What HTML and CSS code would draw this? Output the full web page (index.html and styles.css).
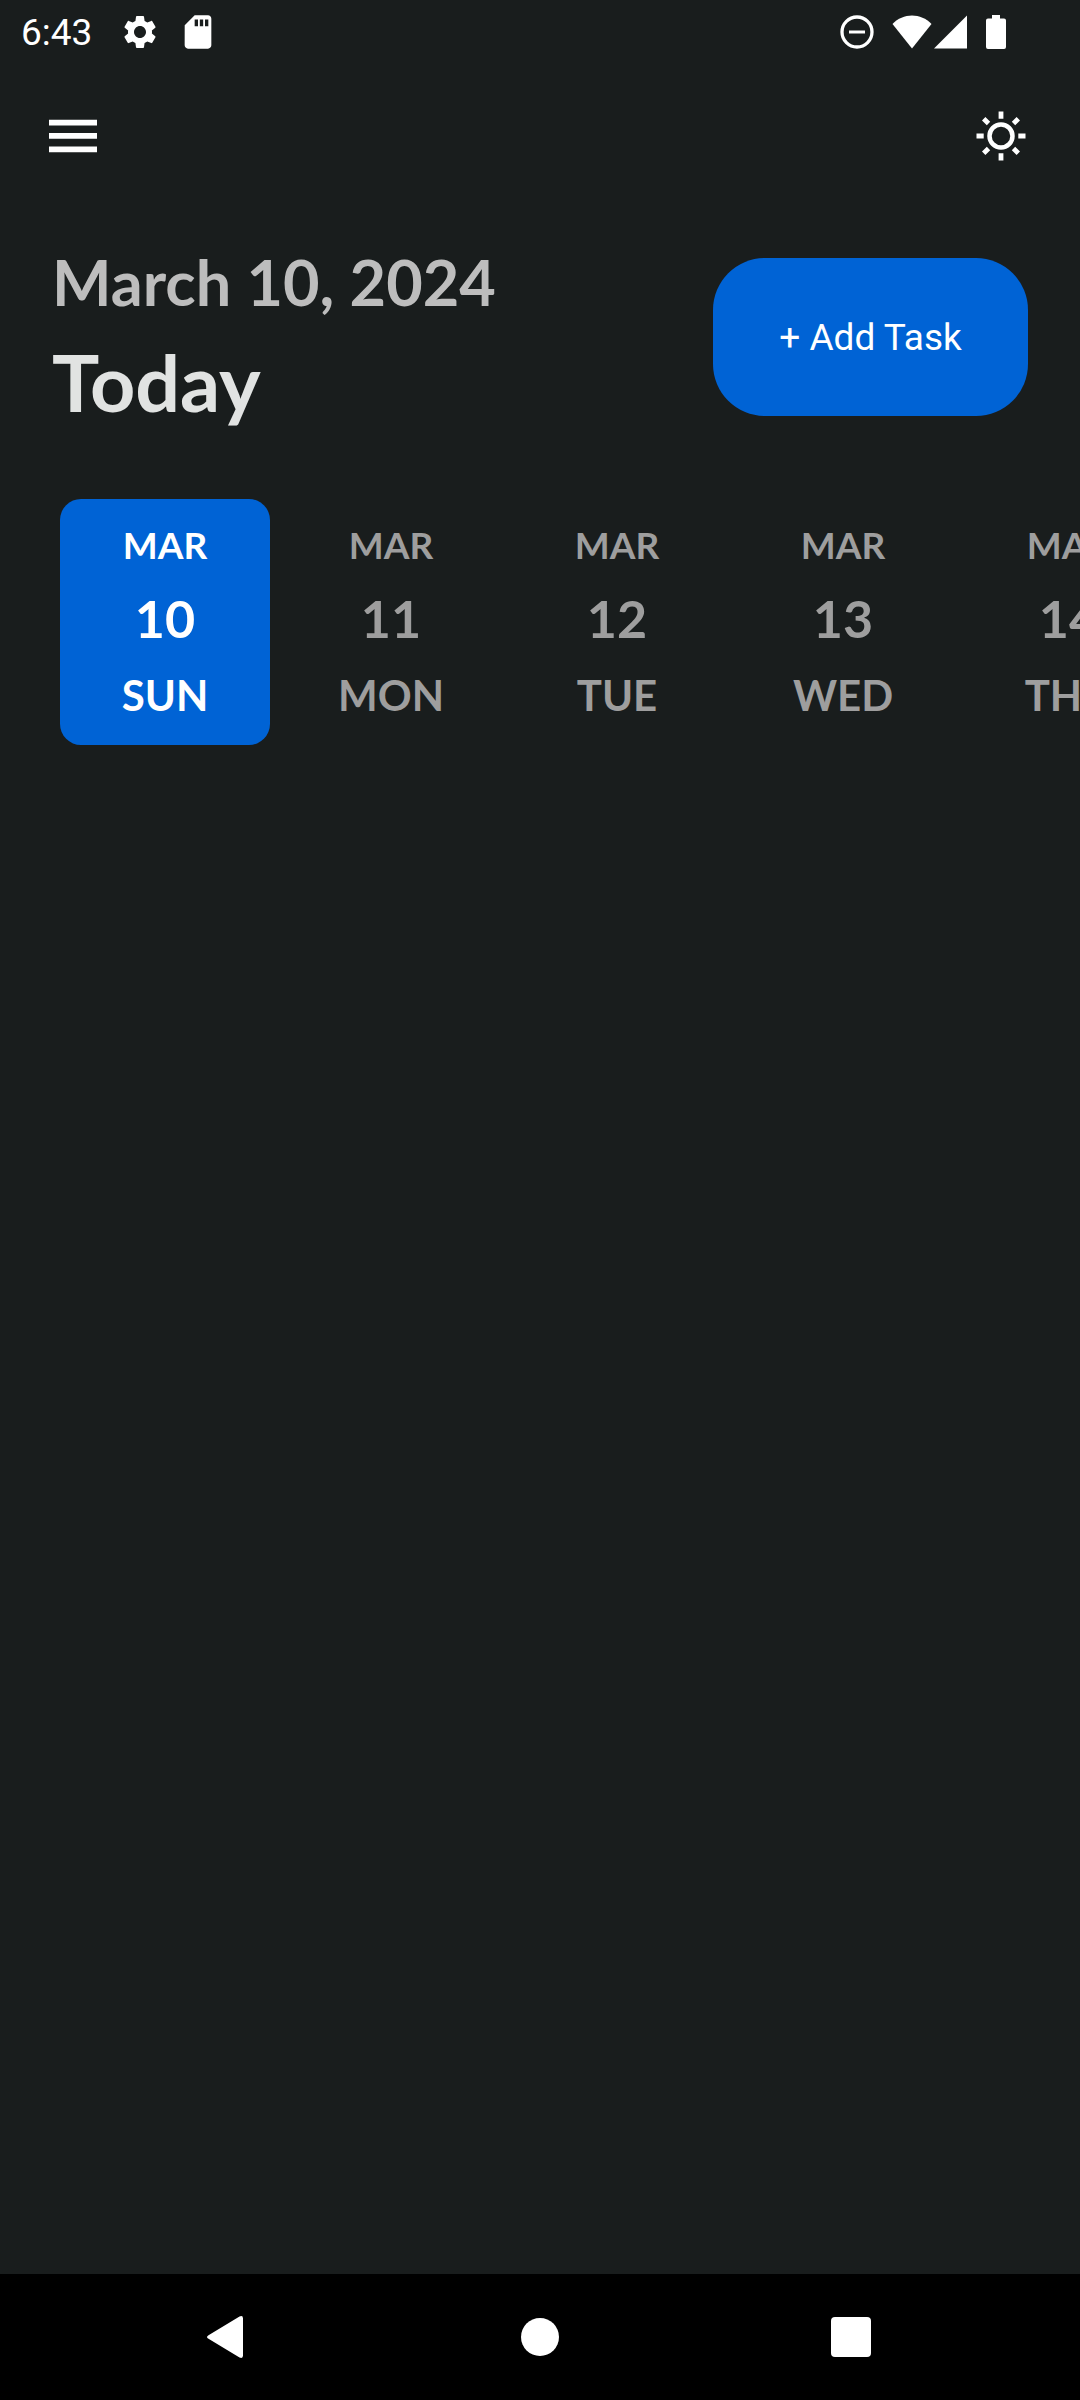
FILE: index.html
```html
<!DOCTYPE html>
<html lang="en">
<head>
<meta charset="utf-8">
<meta name="viewport" content="width=device-width, initial-scale=1">
<title>Tasks</title>
<link rel="stylesheet" href="styles.css">
</head>
<body>
<div class="status-bar">
  <time class="clock">6:43</time>
  <svg class="status-gear" width="40" height="40" viewBox="0 0 24 24" aria-hidden="true"><path d="M19.14 12.94c.04-.3.06-.61.06-.94 0-.32-.02-.64-.07-.94l2.03-1.58c.18-.14.23-.41.12-.61l-1.92-3.32c-.12-.22-.37-.29-.59-.22l-2.39.96c-.5-.38-1.03-.7-1.62-.94l-.36-2.54c-.04-.24-.24-.41-.48-.41h-3.84c-.24 0-.43.17-.47.41l-.36 2.54c-.59.24-1.13.57-1.62.94l-2.39-.96c-.22-.08-.47 0-.59.22L2.74 8.87c-.12.21-.08.47.12.61l2.03 1.58c-.05.3-.09.63-.09.94s.02.64.07.94l-2.03 1.58c-.18.14-.23.41-.12.61l1.92 3.32c.12.22.37.29.59.22l2.39-.96c.5.38 1.03.7 1.62.94l.36 2.54c.05.24.24.41.48.41h3.84c.24 0 .44-.17.47-.41l.36-2.54c.59-.24 1.13-.56 1.62-.94l2.39.96c.22.08.47 0 .59-.22l1.92-3.32c.12-.22.07-.47-.12-.61l-2.01-1.58zM12 15.6c-1.98 0-3.6-1.62-3.6-3.6s1.62-3.6 3.6-3.6 3.6 1.62 3.6 3.6-1.62 3.6-3.6 3.6z"/></svg>
  <svg class="status-card" width="40" height="40" viewBox="0 0 24 24" aria-hidden="true"><path d="M18 2h-8L4.020 8 4 20c0 1.100.9 2 2 2h12c1.100 0 2-.9 2-2V4c0-1.100-.9-2-2-2zm-6 6.500h-2V4.500h2v4zm3.100 0h-2V4.500h2v4zm3.100 0h-2V4.500h2v4z"/></svg>
  <div class="status-right">
    <svg class="status-dnd" width="34" height="34" viewBox="0 0 34 34" aria-hidden="true"><circle cx="17" cy="17" r="15" fill="none" stroke="#fff" stroke-width="3.300"/><path d="M9 15.500h16v3H9z"/></svg>
    <svg width="40" height="34" viewBox="0 0 40 34" aria-hidden="true"><path d="M0.500 9C11-2.500 29-2.500 39.500 9L20 33.500z"/></svg>
    <svg width="34" height="34" viewBox="0 0 34 34" aria-hidden="true"><path d="M33 0.500V33.500H0z"/></svg>
    <svg class="status-battery" width="20" height="34" viewBox="0 0 20 34" aria-hidden="true"><path d="M6 0h8v3.500h4q2 0 2 2V32q0 2-2 2H2q-2 0-2-2V5.500q0-2 2-2h4z"/></svg>
  </div>
</div>

<header class="app-bar">
  <button class="icon-button" type="button" aria-label="Open menu">
    <svg width="64" height="64" viewBox="0 0 24 24" aria-hidden="true"><path d="M3 5.900h18v2.150H3zM3 10.900h18v2.150H3zM3 15.900h18v2.150H3z"/></svg>
  </button>
  <button class="icon-button" type="button" aria-label="Switch to light theme">
    <svg width="50" height="50" viewBox="0 0 50 50" fill="none" stroke="#fff" aria-hidden="true">
      <circle cx="25" cy="25" r="11.500" stroke-width="4.500"/>
      <path stroke-width="4.800" d="M25 .5v7.200M25 42.300v7.200M.5 25h7.200M42.300 25h7.200M7.700 7.700l4.800 4.800M37.500 37.500l4.800 4.800M42.300 7.700l-4.800 4.800M12.500 37.500l-4.800 4.800"/>
    </svg>
  </button>
</header>

<main>
  <section class="summary">
    <div class="heading">
      <p class="date">March 10, 2024</p>
      <h1 class="title">Today</h1>
    </div>
    <button class="add-task" type="button">+ Add Task</button>
  </section>

  <div class="days">
    <button class="day selected" type="button" aria-pressed="true"><span class="month">MAR</span><span class="number">10</span><span class="weekday">SUN</span></button>
    <button class="day" type="button"><span class="month">MAR</span><span class="number">11</span><span class="weekday">MON</span></button>
    <button class="day" type="button"><span class="month">MAR</span><span class="number">12</span><span class="weekday">TUE</span></button>
    <button class="day" type="button"><span class="month">MAR</span><span class="number">13</span><span class="weekday">WED</span></button>
    <button class="day" type="button"><span class="month">MAR</span><span class="number">14</span><span class="weekday">THU</span></button>
  </div>
</main>

<nav class="system-nav" aria-label="System">
  <button class="nav-button" type="button" aria-label="Back"><svg width="48" height="48" viewBox="0 0 48 48" aria-hidden="true"><path d="M3.500 22.200Q.5 24 3.500 25.800L34.500 44.500Q38 46 38 42.500V5.500Q38 2 34.500 3.500z"/></svg></button>
  <button class="nav-button" type="button" aria-label="Home"><svg width="48" height="48" viewBox="0 0 48 48" aria-hidden="true"><circle cx="24" cy="24" r="19"/></svg></button>
  <button class="nav-button" type="button" aria-label="Recent apps"><svg width="48" height="48" viewBox="0 0 48 48" aria-hidden="true"><rect x="4" y="4" width="40" height="40" rx="4"/></svg></button>
</nav>
</body>
</html>
```
FILE: styles.css
```css
* {
  box-sizing: border-box;
}

body {
  margin: 0;
  min-height: 100vh;
  display: flex;
  flex-direction: column;
  background: #191d1d;
  color: #fff;
  font-family: Lato, sans-serif;
}

button {
  margin: 0;
  padding: 0;
  border: 0;
  background: none;
  color: inherit;
  font: inherit;
  cursor: pointer;
}

svg {
  display: block;
  flex: none;
  fill: #fff;
}

svg[fill="none"] {
  fill: none;
}

.status-bar {
  display: flex;
  align-items: center;
  height: 63px;
  padding: 0 74px 0 21px;
}

.clock {
  padding-top: 2px;
  font: 400 37px/44px Roboto, sans-serif;
}

.status-gear {
  margin-left: 28px;
}

.status-card {
  margin-left: 18px;
}

.status-right {
  display: flex;
  align-items: center;
  gap: 2px;
  margin-left: auto;
}

.status-dnd {
  margin-right: 16px;
}

.status-battery {
  margin-left: 16px;
}

.app-bar {
  display: flex;
  align-items: center;
  justify-content: space-between;
  height: 145px;
  padding: 0 16px 0 10px;
}

.icon-button {
  display: grid;
  place-items: center;
  width: 126px;
  height: 126px;
}

.summary {
  display: flex;
  align-items: center;
  justify-content: space-between;
  padding: 36px 52px 0;
}

.heading {
  display: flex;
  flex-direction: column;
  gap: 15px;
}

.date,
.title {
  margin: 0;
  font-weight: 700;
}

.date {
  color: #bdbdbd;
  font-size: 63px;
  line-height: 76px;
}

.title {
  color: #e1e3e2;
  font-size: 79px;
  line-height: 94px;
}

.add-task {
  min-width: 315px;
  padding: 58px 52px 56px;
  border-radius: 52px;
  background: #0063d5;
  font: 400 37px/44px Roboto, sans-serif;
}

.days {
  display: flex;
  gap: 16px;
  margin-top: 70px;
  padding-left: 60px;
  overflow-x: auto;
  scrollbar-width: none;
}

.day {
  display: flex;
  flex: none;
  flex-direction: column;
  align-items: center;
  gap: 21px;
  width: 210px;
  padding: 24px 0;
  border-radius: 21px;
  color: #9e9e9e;
  font-weight: 700;
}

.selected {
  background: #0063d5;
  color: #fff;
}

.month {
  font-size: 37px;
  line-height: 44px;
}

.number {
  font-size: 52px;
  line-height: 60px;
}

.weekday {
  font-size: 42px;
  line-height: 52px;
}

.system-nav {
  display: grid;
  grid-template-columns: repeat(3, 1fr);
  margin-top: auto;
  padding: 0 73px;
  background: #000;
}

.nav-button {
  display: grid;
  place-items: center;
  height: 126px;
}
```
